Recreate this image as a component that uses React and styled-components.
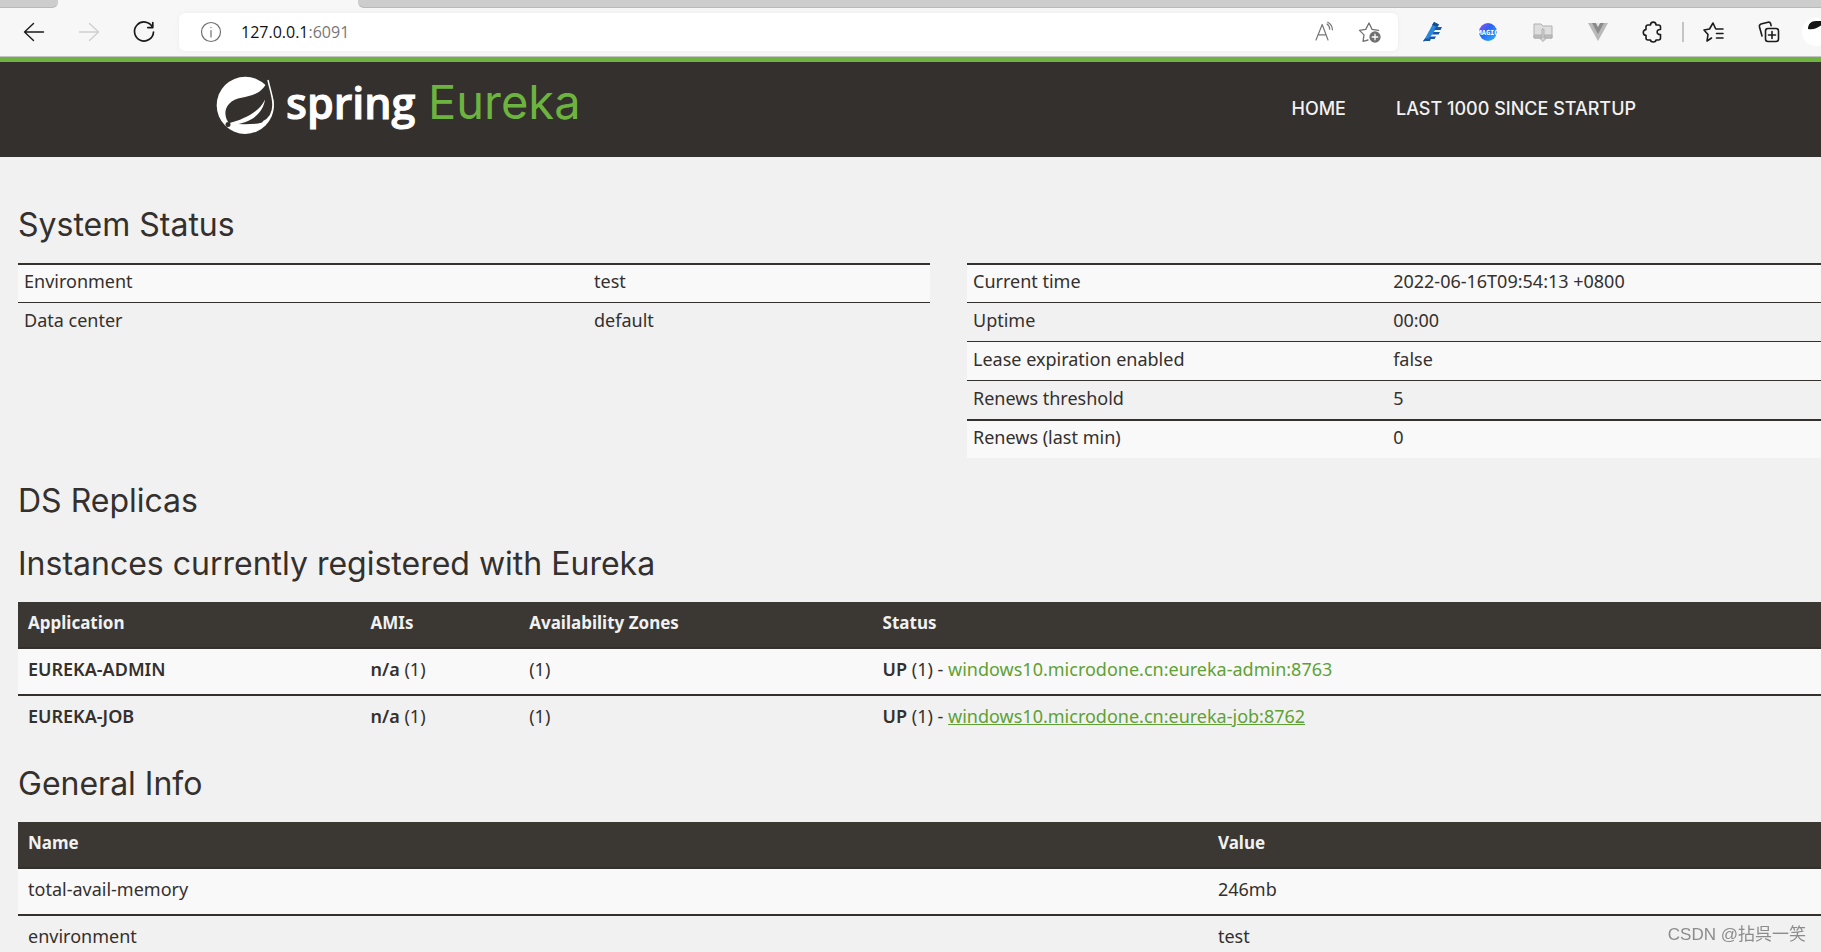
import React from "react";
import styled, { createGlobalStyle } from "styled-components";

const GlobalStyle = createGlobalStyle`
  * { box-sizing: border-box; }
  body {
    margin: 0;
    background: #f1f1f1;
    color: #34302d;
    font-family: "Noto Sans", sans-serif;
    font-size: 18px;
    line-height: 24px;
    overflow: hidden;
  }
`;

/* === BROWSER === */
const TabStrip = styled.div`
  display: flex;
  justify-content: space-between;
  height: 8px;
  background: #f7f7f7;
`;

const TabEdge = styled.div`
  width: ${(p) => (p.$first ? "58px" : "auto")};
  flex: ${(p) => (p.$first ? "none" : "1")};
  margin-left: ${(p) => (p.$first ? "0" : "300px")};
  background: #cdcdcd;
  border-bottom: 1px solid #b8b8b8;
  border-radius: ${(p) => (p.$first ? "0 0 6px 0" : "0 0 0 6px")};
`;

const Toolbar = styled.div`
  display: flex;
  align-items: center;
  height: 49px;
  padding: 0 0 1px 22px;
  background: #f7f7f7;
  border-bottom: 1px solid #c4c4c4;
`;

const IconButton = styled.button`
  display: flex;
  flex: none;
  align-items: center;
  justify-content: center;
  width: ${(p) => (p.$wide ? "55px" : "24px")};
  height: 32px;
  padding: 0;
  border: 0;
  background: none;
  color: ${(p) => p.$color || "#1b1b1b"};
`;

const NavButtons = styled.div`
  display: flex;
  gap: 31px;
`;

const AddressBar = styled.div`
  display: flex;
  flex: 1;
  align-items: center;
  height: 38px;
  margin-left: 23px;
  padding: 0 16px 0 20px;
  background: #fff;
  border-radius: 6px;
  box-shadow: 0 0 4px #ececec;
  gap: 18px;
  color: #707070;
`;

const Url = styled.a`
  flex: 1;
  color: #777;
  font-family: "Open Sans", sans-serif;
  font-size: 16px;
  text-decoration: none;

  span { color: #111; }
`;

const Tools = styled.div`
  display: flex;
  gap: 21px;
`;

const Extensions = styled.div`
  display: flex;
  align-items: center;
  padding-left: 7px;
`;

const Divider = styled.span`
  width: 2px;
  height: 20px;
  margin: 0 2px;
  background: #c4c4c4;
`;

const Avatar = styled.div`
  flex: none;
  width: 19px;
  height: 28px;
  margin-left: 6px;
  overflow: hidden;
`;

/* === HEADER === */
const Header = styled.header`
  background: #34302d;
  border-top: 5px solid #6db33f;
`;

const Navbar = styled.div`
  display: flex;
  justify-content: space-between;
  height: 95px;
  padding: 0 185px 0 216px;
`;

const Brand = styled.a`
  display: flex;
`;

const Menu = styled.nav`
  display: flex;
  align-items: center;
  gap: 50px;
  height: 93px;
`;

const MenuLink = styled.a`
  color: #f1f1f1;
  font-family: "Inter", sans-serif;
  font-size: 18px;
  font-weight: 500;
  text-decoration: none;
`;

/* === CONTENT === */
const Main = styled.main`
  padding: 49px 0 0 18px;
`;

const Heading = styled.h1`
  margin: 0;
  padding-bottom: 20px;
  font-family: "Inter", sans-serif;
  font-size: 32px;
  font-weight: 400;
  line-height: 37px;
`;

const Section = styled.section`
  margin-bottom: ${(p) => (p.$empty ? "6px" : "24px")};
`;

const StatusColumns = styled.div`
  display: grid;
  grid-template-columns: 912fr 854fr;
  align-items: start;
  gap: 37px;
`;

const Table = styled.table`
  width: 100%;
  table-layout: fixed;
  border-collapse: separate;
  border-spacing: 0;
  text-align: left;

  tbody tr:nth-child(odd) { background: #f9f9f9; }
`;

const StatusCell = styled.td`
  width: ${(p) => p.$width || "auto"};
  height: 39px;
  padding: 4px 6px 9px;
  border-top: ${(p) => (p.$thick ? "2px" : "1px")} solid #34302d;
`;

const Th = styled.th`
  width: ${(p) => p.$width || "auto"};
  height: 47px;
  padding: 9px 10px 12px;
  background: #3b3834;
  color: #f1f1f1;
  font-size: 17px;
  border-bottom: 2px solid #34302d;
`;

const Td = styled.td`
  padding: 8px 10px 13px;

  tr:not(:last-child) > & { border-bottom: 2px solid #34302d; }
  b { font-weight: 600; }
`;

const InstanceLink = styled.a`
  color: #5fa134;
  text-decoration: ${(p) => (p.$hovered ? "underline" : "none")};
`;

const Watermark = styled.div`
  position: fixed;
  right: 15px;
  bottom: 5px;
  color: #8c8c8c;
  font-family: "Liberation Sans", "Noto Sans CJK SC", sans-serif;
  font-size: 17px;
`;

const general = [
  ["total-avail-memory", "246mb"],
  ["environment", "test"],
];

const instances = [
  { app: "EUREKA-ADMIN", id: "windows10.microdone.cn:eureka-admin:8763" },
  { app: "EUREKA-JOB", id: "windows10.microdone.cn:eureka-job:8762", hovered: true },
];

const environment = [
  ["Environment", "test"],
  ["Data center", "default"],
];

const runtime = [
  ["Current time", "2022-06-16T09:54:13 +0800"],
  ["Uptime", "00:00"],
  ["Lease expiration enabled", "false"],
  ["Renews threshold", "5"],
  ["Renews (last min)", "0"],
];

function Icon({ size = 24, width = 1.4, children }) {
  return (
    <svg width={size} height={size} viewBox="0 0 24 24" fill="none" stroke="currentColor"
      strokeWidth={width} strokeLinecap="round" strokeLinejoin="round">
      {children}
    </svg>
  );
}

function Browser() {
  return (
    <>
      <TabStrip>
        <TabEdge $first />
        <TabEdge />
      </TabStrip>
      <Toolbar>
        <NavButtons>
          <IconButton aria-label="Back"><Icon><path d="M21.5 12H2.5M11.5 3.5L2.5 12l9 8.5" /></Icon></IconButton>
          <IconButton aria-label="Forward" $color="#d0d0d0"><Icon><path d="M2.5 12h19M12.5 3.5l9 8.5-9 8.5" /></Icon></IconButton>
          <IconButton aria-label="Refresh"><Icon width={1.7}><path d="M20.5 7.2A9.5 9.5 0 1 0 21.5 12M20.800 2.600v5h-5" /></Icon></IconButton>
        </NavButtons>
        <AddressBar>
          <IconButton aria-label="Site information" $color="#707070">
            <Icon width={1.2}><circle cx="12" cy="12" r="9.5" /><path d="M12 10.5v6.5M12 7.4v.2" /></Icon>
          </IconButton>
          <Url href="#"><span>127.0.0.1</span>:6091</Url>
          <Tools>
            <IconButton aria-label="Read aloud" $color="#777">
              <Icon width={1.2}><path d="M3 20L9.2 4.5 15 20M5.2 14.8h7.8M14 4c1.8 1.2 2.7 3 2.7 5.2M14.8 2.2c3 1.6 4.5 4 4.6 7.6" /></Icon>
            </IconButton>
            <IconButton aria-label="Add to favorites" $color="#707070">
              <Icon width={1.3}>
                <path d="M10 20l-5 1.400 1-6.500-4.500-4.500 6.200-1L11 3l3 6.300 6.500 1" />
                <circle cx="17" cy="17" r="5" fill="#707070" />
                <path d="M14.2 17h5.6M17 14.2v5.6" stroke="#fff" />
              </Icon>
            </IconButton>
          </Tools>
        </AddressBar>
        <Extensions>
          <IconButton $wide aria-label="Editor">
            <svg width="24" height="24" viewBox="0 0 24 24">
              <path d="M13 2l5 2.5L7.5 19.5 2 22z" fill="#2c86dc" />
              <path d="M15 7h6l-1.5 3H13zM12.5 12h6.5l-1.5 2.5H11zM9 16.5h6L13.5 19H7.5z" fill="#1756a8" />
              <path d="M4 18.5h6L9 21H2z" fill="#1756a8" />
              <path d="M13 2l5 2.5-1.5 2.5L11 5z" fill="#154d94" />
            </svg>
          </IconButton>
          <IconButton $wide aria-label="Magic">
            <svg width="24" height="24" viewBox="0 0 24 24">
              <defs>
                <linearGradient id="magic" x1="0" y1="0" x2="1" y2="1">
                  <stop offset="0" stopColor="#a44df0" />
                  <stop offset=".4" stopColor="#2c62f2" />
                  <stop offset="1" stopColor="#28b8ff" />
                </linearGradient>
              </defs>
              <circle cx="12" cy="12" r="9" fill="url(#magic)" />
              <text x="12" y="14.5" textAnchor="middle" fill="#fff" fontFamily="DejaVu Sans Mono, monospace" fontSize="7" fontWeight="700">MAGIC</text>
            </svg>
          </IconButton>
          <IconButton $wide aria-label="Downloads">
            <svg width="24" height="24" viewBox="0 0 24 24" fill="#dedede" stroke="#b0b0b0">
              <path d="M3 4h7l2 2h9v12H3z" />
              <path d="M3 15h18v3H3z" fill="#bcbcbc" />
              <path d="M11 9h2v9h2.5L12 21.5 8.5 18H11z" fill="#d2d2d2" />
            </svg>
          </IconButton>
          <IconButton $wide aria-label="Vue devtools">
            <svg width="24" height="24" viewBox="0 0 24 24">
              <path d="M2 3h20L12 21z" fill="#b9b9b9" />
              <path d="M6 3h4l2 4 2-4h4l-6 11z" fill="#8a8a8a" />
              <path d="M10 3h4l-2 4z" fill="#e4e4e4" />
            </svg>
          </IconButton>
          <IconButton $wide aria-label="Extensions">
            <Icon width={1.6}><path d="M7 5h2.5c0-3.800 5.500-3.800 5.500 0h2.5Q19.5 5 19.5 7v2.500c-4.500-.6-4.500 5.600 0 5V18q0 2-2 2H15c0 2.600-5.500 2.600-5.500 0H7q-2 0-2-2v-2.800c-3.600 0-3.600-5.600 0-5.600V7q0-2 2-2z" /></Icon>
          </IconButton>
          <Divider />
          <IconButton $wide aria-label="Favorites">
            <Icon width={1.6}><path d="M9.5 18L5 21l1-6.5L2 10l5.5-1L11 3l2.5 5.5M14 9h7M14.5 13.500H21M14.5 18H21" /></Icon>
          </IconButton>
          <IconButton $wide aria-label="Collections">
            <Icon width={1.6}><rect x="8.5" y="8.5" width="13" height="13" rx="2.5" /><path d="M15 11.5v7M11.5 15h7M5 16L2.5 7q-.5-2.200 1.500-3l7-1.800q2-.4 2.600 1.400l.5 2" /></Icon>
          </IconButton>
          <Avatar>
            <svg width="28" height="28" viewBox="0 0 28 28">
              <circle cx="14" cy="14" r="14" fill="#fff" />
              <path d="M6 11c0-5 3-8 8-8h6v4c-5 3-8 5-14 4z" fill="#151515" />
            </svg>
          </Avatar>
        </Extensions>
      </Toolbar>
    </>
  );
}

function Logo() {
  return (
    <svg width="390" height="90" viewBox="0 -14 390 90" role="img" aria-label="Spring Eureka">
      <circle cx="29.3" cy="29.3" r="28.6" fill="#fff" />
      <path d="M52 4C54 14 57 20 57 29c0 10-6 17-15 18.500-8 1-18 .5-28 .5C8 42 8 33 13 28 23 17 43 26 52 4z" fill="#34302d" />
      <path d="M52 4C54 14 57 20 57 29c0 8-4 14-10 17" fill="none" stroke="#fff" strokeWidth="1.5" />
      <path d="M12 47.5C30 43 44 35 49 23.5 47 38 34 48 14 49z" fill="#fff" />
      <circle cx="12" cy="48.5" r="2.5" fill="#34302d" />
      <text x="70" y="43" fill="#fff" stroke="#fff" fontFamily="Open Sans, sans-serif" fontSize="43" fontWeight="600">spring</text>
      <text x="212" y="43" fill="#6db33f" fontFamily="Inter, sans-serif" fontSize="47">Eureka</text>
    </svg>
  );
}

function StatusTable({ rows, width, thick }) {
  return (
    <Table>
      <tbody>
        {rows.map(([name, value], i) => (
          <tr key={name}>
            <StatusCell $width={width} $thick={thick.includes(i)}>{name}</StatusCell>
            <StatusCell $thick={thick.includes(i)}>{value}</StatusCell>
          </tr>
        ))}
      </tbody>
    </Table>
  );
}

function App() {
  return (
    <>
      <GlobalStyle />
      <Browser />
      <Header>
        <Navbar>
          <Brand href="#"><Logo /></Brand>
          <Menu>
            <MenuLink href="#">HOME</MenuLink>
            <MenuLink href="#">LAST 1000 SINCE STARTUP</MenuLink>
          </Menu>
        </Navbar>
      </Header>
      <Main>
        <Section>
          <Heading>System Status</Heading>
          <StatusColumns>
            <StatusTable rows={environment} width="62.5%" thick={[0]} />
            <StatusTable rows={runtime} width="49.2%" thick={[0, 4]} />
          </StatusColumns>
        </Section>
        <Section $empty>
          <Heading>DS Replicas</Heading>
        </Section>
        <Section>
          <Heading>Instances currently registered with Eureka</Heading>
          <Table>
            <thead>
              <tr>
                <Th $width="19%">Application</Th>
                <Th $width="8.8%">AMIs</Th>
                <Th $width="19.6%">Availability Zones</Th>
                <Th>Status</Th>
              </tr>
            </thead>
            <tbody>
              {instances.map((item) => (
                <tr key={item.app}>
                  <Td><b>{item.app}</b></Td>
                  <Td><b>n/a</b> (1)</Td>
                  <Td>(1)</Td>
                  <Td><b>UP</b> (1) - <InstanceLink href="#" $hovered={item.hovered}>{item.id}</InstanceLink></Td>
                </tr>
              ))}
            </tbody>
          </Table>
        </Section>
        <Section>
          <Heading>General Info</Heading>
          <Table>
            <thead>
              <tr>
                <Th $width="66%">Name</Th>
                <Th>Value</Th>
              </tr>
            </thead>
            <tbody>
              {general.map(([name, value]) => (
                <tr key={name}>
                  <Td>{name}</Td>
                  <Td>{value}</Td>
                </tr>
              ))}
            </tbody>
          </Table>
        </Section>
      </Main>
      <Watermark>CSDN @拈呉一笑</Watermark>
    </>
  );
}

export default App;
